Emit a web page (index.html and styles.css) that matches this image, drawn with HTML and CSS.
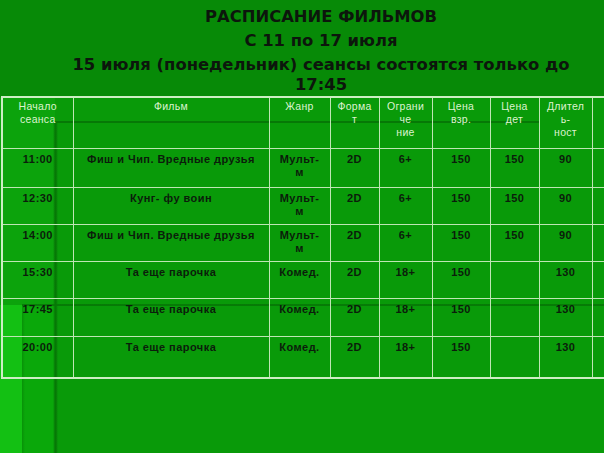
FILE: index.html
```html
<!DOCTYPE html>
<html lang="ru">
<head>
<meta charset="utf-8">
<title>Расписание фильмов</title>
<link rel="stylesheet" href="styles.css">
</head>
<body>
<div class="slide">
  <header class="title">
    <p class="title-line">РАСПИСАНИЕ ФИЛЬМОВ</p>
    <p class="title-line">С 11 по 17 июля</p>
    <p class="title-line">15 июля (понедельник) сеансы состоятся только до<br>17:45</p>
  </header>
  <table class="schedule">
    <colgroup>
      <col class="c-time"><col class="c-film"><col class="c-genre"><col class="c-format"><col class="c-age"><col class="c-price"><col class="c-kids"><col class="c-dur"><col class="c-extra">
    </colgroup>
    <thead>
      <tr class="head-row">
        <th>Начало<br>сеанса</th>
        <th>Фильм</th>
        <th>Жанр</th>
        <th>Форма<br>т</th>
        <th>Ограни<br>че<br>ние</th>
        <th>Цена<br>взр.</th>
        <th>Цена<br>дет</th>
        <th>Длител<br>ь-<br>ност</th>
        <th></th>
      </tr>
    </thead>
    <tbody>
      <tr class="r1">
        <td>11:00</td><td>Фиш и Чип. Вредные друзья</td><td>Мульт-<br>м</td><td>2D</td><td>6+</td><td>150</td><td>150</td><td>90</td><td></td>
      </tr>
      <tr class="r2">
        <td>12:30</td><td>Кунг- фу воин</td><td>Мульт-<br>м</td><td>2D</td><td>6+</td><td>150</td><td>150</td><td>90</td><td></td>
      </tr>
      <tr class="r3">
        <td>14:00</td><td>Фиш и Чип. Вредные друзья</td><td>Мульт-<br>м</td><td>2D</td><td>6+</td><td>150</td><td>150</td><td>90</td><td></td>
      </tr>
      <tr class="r4">
        <td>15:30</td><td>Та еще парочка</td><td>Комед.</td><td>2D</td><td>18+</td><td>150</td><td></td><td>130</td><td></td>
      </tr>
      <tr class="r5">
        <td>17:45</td><td>Та еще парочка</td><td>Комед.</td><td>2D</td><td>18+</td><td>150</td><td></td><td>130</td><td></td>
      </tr>
      <tr class="r6">
        <td>20:00</td><td>Та еще парочка</td><td>Комед.</td><td>2D</td><td>18+</td><td>150</td><td></td><td>130</td><td></td>
      </tr>
    </tbody>
  </table>
</div>
</body>
</html>
```
FILE: styles.css
```css
html, body {
  margin: 0;
  padding: 0;
}

body {
  width: 604px;
  height: 453px;
  overflow: hidden;
  font-family: "Liberation Sans", Arial, sans-serif;
  background-color: #078a07;
  background-image:
    /* template shadow lines */
    linear-gradient(#067806, #067806),
    linear-gradient(90deg, rgba(6, 120, 6, 0), #067806 40%, #067806 60%, rgba(6, 120, 6, 0)),
    linear-gradient(rgba(5, 110, 5, 0.7), rgba(5, 110, 5, 0.7)),
    linear-gradient(90deg, rgba(6, 130, 6, 0.6), rgba(6, 130, 6, 0)),
    /* bright strips at lower left */
    linear-gradient(#13c013, #13c013),
    linear-gradient(#0aa80a, #0aa80a),
    /* lighter left band inside table */
    linear-gradient(#0ca30c, #0ca30c),
    /* main lower area */
    linear-gradient(#099a09, #099a09);
  background-size:
    485px 2px,
    5px 332px,
    582px 2px,
    3px 148px,
    22px 148px,
    33px 148px,
    55px 208px,
    604px 356px;
  background-position:
    55px 121px,
    53px 121px,
    22px 304px,
    22px 305px,
    0 305px,
    22px 305px,
    0 97px,
    0 97px;
  background-repeat: no-repeat;
}

.slide {
  width: 604px;
  height: 453px;
}

.title {
  padding: 7px 0 0 38px;
  text-align: center;
  color: #0c160c;
  font-family: "DejaVu Sans", "Liberation Sans", sans-serif;
  font-weight: bold;
  font-size: 16.4px;
  line-height: 20px;
}

.title-line {
  margin: 0 0 4px;
}

.title-line:last-child {
  margin-bottom: 0;
}

.schedule {
  margin: 1px 0 0 1px;
  width: 603px;
  table-layout: fixed;
  border-collapse: collapse;
  border-top: 2px solid #cdeec4;
  border-bottom: 2px solid #cdeec4;
  border-left: 2px solid #cdeec4;
}

.c-time { width: 71px; }
.c-film { width: 196px; }
.c-genre { width: 61px; }
.c-format { width: 49px; }
.c-age { width: 53px; }
.c-price { width: 58px; }
.c-kids { width: 49px; }
.c-dur { width: 53px; }
.c-extra { width: 13px; }

.schedule th,
.schedule td {
  border: 1px solid #bfe6b4;
  padding: 0;
  text-align: center;
  vertical-align: top;
  overflow: hidden;
  white-space: nowrap;
}

.schedule th {
  color: #dcf3cf;
  font-weight: normal;
  font-size: 10.5px;
  letter-spacing: 0.3px;
  line-height: 13px;
  padding-top: 2px;
}

.schedule td {
  color: #0b1d0b;
  font-weight: bold;
  font-size: 11px;
  letter-spacing: 0.45px;
  line-height: 13px;
  padding-top: 4px;
}

.head-row { height: 51px; }
.r1 { height: 39px; }
.r2 { height: 37px; }
.r3 { height: 37px; }
.r4 { height: 37px; }
.r5 { height: 38px; }
.r6 { height: 42px; }
```
